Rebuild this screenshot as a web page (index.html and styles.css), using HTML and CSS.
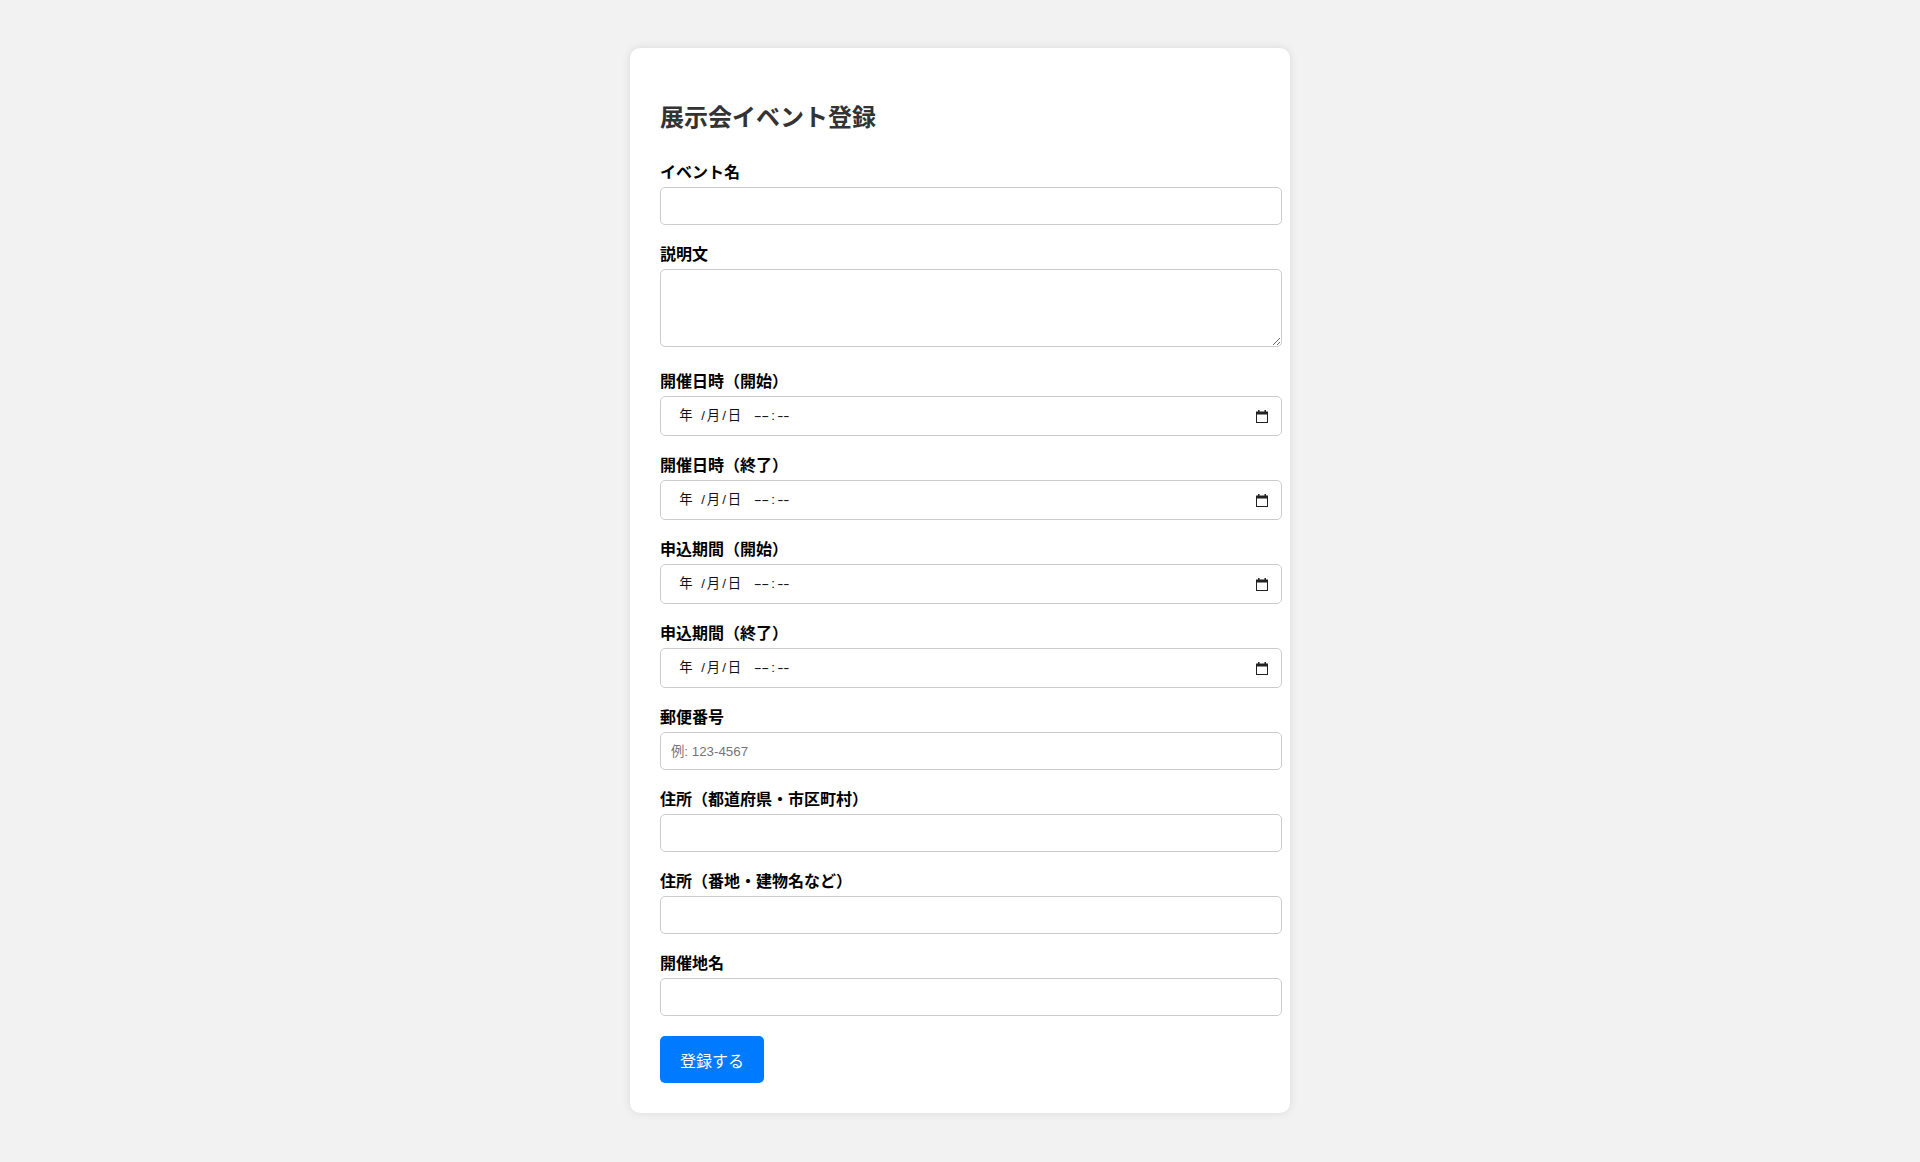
FILE: index.html
```html
<!DOCTYPE html>
<html lang="ja">
<head>
<meta charset="utf-8">
<title>展示会イベント登録</title>
<link rel="stylesheet" href="styles.css">
</head>
<body>
<div class="card">
  <h2 class="title">展示会イベント登録</h2>
  <form class="form">
    <div class="group">
      <label class="label">イベント名</label>
      <input class="field" type="text">
    </div>
    <div class="group">
      <label class="label">説明文</label>
      <textarea class="field area"></textarea>
    </div>
    <div class="group group-area">
      <label class="label">開催日時（開始）</label>
      <div class="field date" tabindex="0">
        <span class="dt-y">年</span><span class="dt-sep">/</span><span class="dt-mo">月</span><span class="dt-sep">/</span><span class="dt-d">日</span><span class="dt-h"><span class="dash dash-h">--</span></span><span class="dt-c">:</span><span class="dt-m"><span class="dash dash-m">--</span></span>
        <svg class="cal" width="12" height="13" viewBox="0 0 12 13"><path d="M2 0h1.5v2H2zM8.5 0H10v2H8.5z" fill="#222"/><rect x="0.5" y="2" width="11" height="10.5" fill="none" stroke="#222"/><rect x="0.5" y="2" width="11" height="2.5" fill="#222"/></svg>
      </div>
    </div>
    <div class="group">
      <label class="label">開催日時（終了）</label>
      <div class="field date" tabindex="0">
        <span class="dt-y">年</span><span class="dt-sep">/</span><span class="dt-mo">月</span><span class="dt-sep">/</span><span class="dt-d">日</span><span class="dt-h"><span class="dash dash-h">--</span></span><span class="dt-c">:</span><span class="dt-m"><span class="dash dash-m">--</span></span>
        <svg class="cal" width="12" height="13" viewBox="0 0 12 13"><path d="M2 0h1.5v2H2zM8.5 0H10v2H8.5z" fill="#222"/><rect x="0.5" y="2" width="11" height="10.5" fill="none" stroke="#222"/><rect x="0.5" y="2" width="11" height="2.5" fill="#222"/></svg>
      </div>
    </div>
    <div class="group">
      <label class="label">申込期間（開始）</label>
      <div class="field date" tabindex="0">
        <span class="dt-y">年</span><span class="dt-sep">/</span><span class="dt-mo">月</span><span class="dt-sep">/</span><span class="dt-d">日</span><span class="dt-h"><span class="dash dash-h">--</span></span><span class="dt-c">:</span><span class="dt-m"><span class="dash dash-m">--</span></span>
        <svg class="cal" width="12" height="13" viewBox="0 0 12 13"><path d="M2 0h1.5v2H2zM8.5 0H10v2H8.5z" fill="#222"/><rect x="0.5" y="2" width="11" height="10.5" fill="none" stroke="#222"/><rect x="0.5" y="2" width="11" height="2.5" fill="#222"/></svg>
      </div>
    </div>
    <div class="group">
      <label class="label">申込期間（終了）</label>
      <div class="field date" tabindex="0">
        <span class="dt-y">年</span><span class="dt-sep">/</span><span class="dt-mo">月</span><span class="dt-sep">/</span><span class="dt-d">日</span><span class="dt-h"><span class="dash dash-h">--</span></span><span class="dt-c">:</span><span class="dt-m"><span class="dash dash-m">--</span></span>
        <svg class="cal" width="12" height="13" viewBox="0 0 12 13"><path d="M2 0h1.5v2H2zM8.5 0H10v2H8.5z" fill="#222"/><rect x="0.5" y="2" width="11" height="10.5" fill="none" stroke="#222"/><rect x="0.5" y="2" width="11" height="2.5" fill="#222"/></svg>
      </div>
    </div>
    <div class="group">
      <label class="label">郵便番号</label>
      <input class="field" type="text" placeholder="例: 123-4567">
    </div>
    <div class="group">
      <label class="label">住所（都道府県・市区町村）</label>
      <input class="field" type="text">
    </div>
    <div class="group">
      <label class="label">住所（番地・建物名など）</label>
      <input class="field" type="text">
    </div>
    <div class="group">
      <label class="label">開催地名</label>
      <input class="field" type="text">
    </div>
    <button class="submit" type="button">登録する</button>
  </form>
</div>
</body>
</html>
```

FILE: styles.css
```css
html, body {
  margin: 0;
  padding: 0;
}

body {
  background: #f2f2f2;
  font-family: "Liberation Sans", "Noto Sans CJK JP", sans-serif;
  color: #000;
}

.card {
  width: 600px;
  margin: 48px auto 49px;
  padding: 30px;
  background: #fff;
  border-radius: 10px;
  box-shadow: 0 0 10px rgba(0, 0, 0, 0.1);
}

.title {
  margin: 21px 0 27px;
  font-size: 24px;
  line-height: 34px;
  font-weight: bold;
  color: #333;
  font-family: "Noto Sans CJK JP", sans-serif;
}

.form {
  display: flex;
  flex-direction: column;
}

.group {
  display: flex;
  flex-direction: column;
  align-items: flex-start;
  margin-bottom: 17px;
}

.group-area {
  margin-top: 5px;
}

.label {
  display: block;
  font-family: "Noto Sans CJK JP", sans-serif;
  font-size: 16px;
  line-height: 22px;
  font-weight: bold;
  margin-bottom: 5px;
  color: #000;
}

.field {
  box-sizing: border-box;
  width: 622px;
  height: 38px;
  margin: 0;
  padding: 10px;
  border: 1px solid #ccc;
  border-radius: 5px;
  background: #fff;
  font-family: "Liberation Sans", "Noto Sans CJK JP", sans-serif;
  font-size: 13.333px;
  color: #000;
  outline: none;
}

.field::placeholder {
  color: #757575;
}

.area {
  height: 78px;
  resize: vertical;
  display: block;
}

.date {
  height: 40px;
  display: flex;
  align-items: center;
  padding: 0 13px 0 10px;
  font-family: "Liberation Sans", "Noto Sans CJK JP", sans-serif;
  font-size: 13.333px;
  line-height: 16px;
  color: #111;
}

.date > span {
  display: block;
  text-align: center;
  flex: none;
}

.dt-y {
  width: 30px;
}

.dt-sep {
  width: 4px;
}

.dt-mo {
  width: 17px;
}

.dt-d {
  width: 17px;
}

.dt-h {
  width: 17px;
  margin-left: 10px;
}

.dt-c {
  width: 6px;
}

.dt-m {
  width: 14px;
}

.dash {
  display: inline-block;
  letter-spacing: -0.3px;
}

.dash-h {
  transform: scaleX(1.8);
}

.dash-m {
  transform: scaleX(1.4);
}

.cal {
  margin-left: auto;
  display: block;
}

.submit {
  align-self: flex-start;
  margin-top: 3px;
  width: 104px;
  height: 47px;
  padding: 0;
  border: none;
  border-radius: 5px;
  background: #007bff;
  color: #fff;
  font-family: "Noto Sans CJK JP", sans-serif;
  font-size: 16px;
  cursor: pointer;
}
```
